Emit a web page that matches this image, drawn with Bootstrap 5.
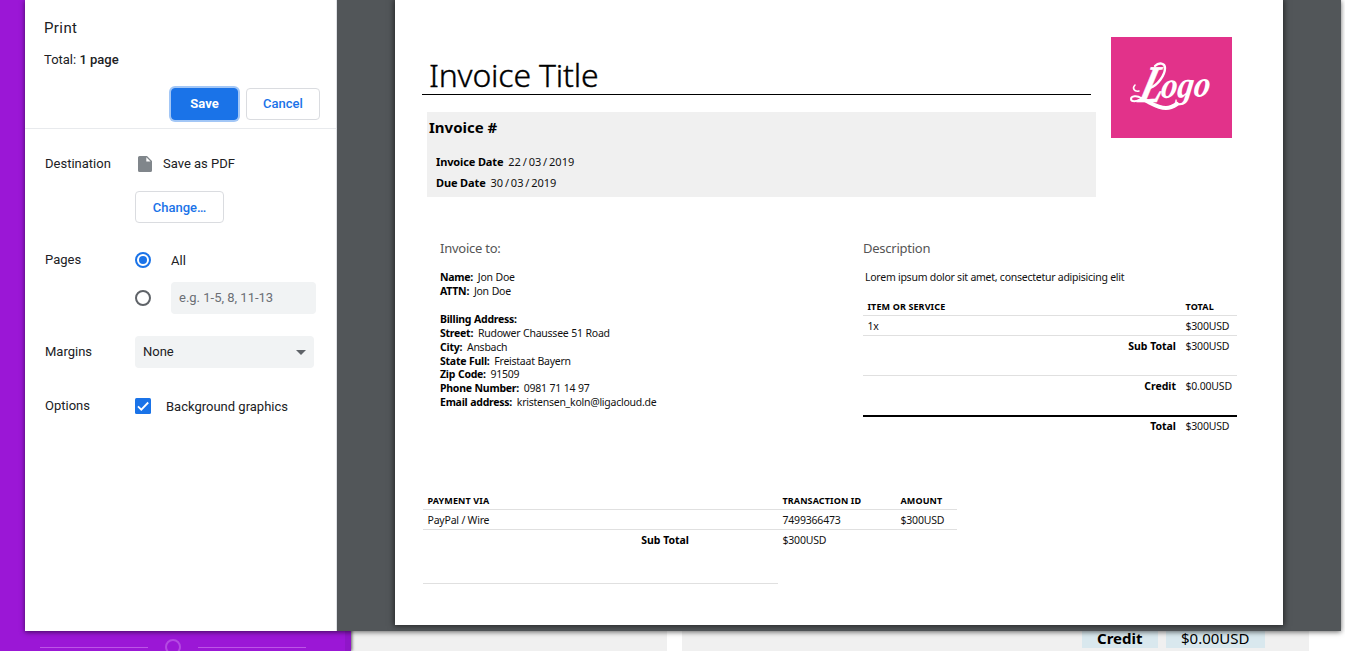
<!DOCTYPE html>
<html lang="en">
<head>
<meta charset="utf-8">
<title>Print invoice</title>
<link rel="stylesheet" href="https://cdn.jsdelivr.net/npm/bootstrap@5.3.0/dist/css/bootstrap.min.css">
<style>
  body { width: 1345px; height: 651px; font-family: Roboto, sans-serif; font-size: 13px; color: #202124; background: #fff; }
  .backdrop { height: 651px; }
  .side { width: 351px; background: #9b17d6; padding-left: 40px; border-right: 6px solid #8f16c8; box-shadow: 1px 0 3px #0009; z-index: 1; }
  .side hr { width: 108px; margin: 0; border-top: 1px solid #c565ea; opacity: .8; }
  .side .ring { width: 16px; height: 16px; border: 2px solid #b44ae2; margin: 0 17px; }
  .side-end { height: 8px; }
  .block-a { width: 316px; background: #f0f0f0; margin-right: 15px; }
  .block-b { width: 627px; background: #f0f0f0; padding: 0 44px 3px 0; gap: 8px; }
  .cellbox { height: 22px; background: #d9e8ee; color: #000; font: 15px/24px "Noto Sans", sans-serif; padding-left: 15px; }
  .dialog { left: 25px; top: 0; width: 1316px; height: 631px; box-shadow: 0 1px 5px #0009; z-index: 5; }
  .settings { width: 312px; background: #fff; border-right: 1px solid #dfe1e5; }
  .head { height: 129px; padding: 18px 16px 0 19px; border-bottom: 1px solid #e8eaed; }
  .head h1 { font-size: 15px; line-height: 20px; margin: 0 0 12px; font-weight: 400; letter-spacing: .4px; }
  .head p { line-height: 20px; margin: 0 0 18px; }
  .head p span { font-weight: 500; }
  .gbtn { height: 32px; font-size: 13px; font-weight: 500; line-height: 30px; padding: 0; border-radius: 4px; border: 1px solid #dadce0; color: #1a73e8; background: #fff; }
  .gbtn.primary { width: 67px; background: #1a73e8; color: #fff; border-color: #1a73e8; box-shadow: 0 0 0 2px #a3c7f6; font-weight: 700; }
  .gbtn.cancel { width: 74px; }
  .gbtn.change { width: 89px; margin-top: 17px; padding-top: 1px; }
  .opt { padding-left: 20px; }
  .opt > .name { width: 90px; flex: none; line-height: 20px; }
  .line20 { height: 20px; }
  .after-radio { margin-left: 20px; }
  .field { background: #f1f3f4; height: 32px; border-radius: 4px; padding: 0 8px; line-height: 32px; }
  .range { width: 145px; color: #6b6f74; }
  .choice { width: 179px; }
  .viewer { width: 1004px; background: #525659; padding: 0 58px; overflow: hidden; }
  .sheet { width: 888px; height: 625px; background: #fff; box-shadow: 0 0 6px 1px #0009; font-family: "Noto Sans", sans-serif; font-size: 11px; color: #111; }
  .sheet b { color: #000; }
  .sheet-top { padding: 37px 51px 0 27px; height: 197px; }
  .doc-title { width: 669px; height: 58px; font-size: 32px; line-height: 75px; font-weight: 300; color: #000; border-bottom: 1px solid #000; padding-left: 7px; margin: 0; white-space: nowrap; letter-spacing: -.2px; -webkit-text-stroke: .35px #000; }
  .meta { width: 669px; height: 85px; background: #f0f0f0; margin: 17px 0 0 5px; padding: 4px 0 0 2px; }
  .meta h2 { font-size: 15px; line-height: 22px; font-weight: 700; color: #000; margin: 0 0 13px; }
  .meta div { line-height: 21px; padding-left: 7px; }
  .meta b { letter-spacing: -.13px; margin-right: 2px; }
  .meta span { word-spacing: -1px; letter-spacing: 0; }
  .cols { padding: 0 46px 0 45px; height: 293px; }
  .cols h3 { font-size: 13px; line-height: 20px; font-weight: 400; color: #555; margin: 41px 0 12px; letter-spacing: -.25px; }
  .facts { line-height: 13.9px; font-size: 10.5px; letter-spacing: -.25px; padding-top: 1px; word-spacing: .3px; }
  .facts b { margin-right: 2px; }
  .lorem { line-height: 14px; padding-left: 2px; margin-bottom: 12px; font-size: 10.5px; letter-spacing: -.25px; }
  .gap-line { height: 14px; }
  .bill { width: 423px; }
  .desc { width: 374px; }
  .grid-t { border-collapse: separate; border-spacing: 0; table-layout: fixed; font-size: 10.5px; letter-spacing: -.2px; }
  .grid-t td, .grid-t th { padding: 2px 0 0 4.500px; height: 20px; line-height: 17px; vertical-align: top; border-bottom: 1px solid #e0e0e0; white-space: nowrap; }
  .grid-t th { font-size: 9px; color: #000; letter-spacing: .12px; }
  .grid-t td.text-end { padding-right: 5px; letter-spacing: 0; }
  .grid-t tr.tall td { height: 40px; }
  .grid-t tr.heavy td { border-bottom: 2px solid #000; height: 41px; }
  .grid-t td.bare, .grid-t tr.bare td { border-bottom: 0; }
  .grid-t tr.bare td { line-height: 15px; }
  .grid-t col.sum { width: 56px; }
  .pay { width: 534px; margin-left: 28px; }
  .pay tr.tall td { height: 54px; }
  .pay col.via { width: 355px; }
  .pay col.tid { width: 118px; }
  .grid-t.pay td.text-end { padding-right: 89px; }
</style>
</head>
<body class="position-relative overflow-hidden m-0">
<div class="backdrop d-flex align-items-end overflow-hidden">
  <div class="side h-100 d-flex align-items-end">
    <div class="d-flex align-items-center side-end"><hr><span class="ring rounded-circle"></span><hr></div>
  </div>
  <div class="block-a h-100"></div>
  <div class="block-b h-100 d-flex justify-content-end align-items-end">
    <div class="cellbox" style="width:76px"><b>Credit</b></div>
    <div class="cellbox" style="width:99px">$0.00USD</div>
  </div>
</div>

<div class="dialog position-absolute d-flex">
  <section class="settings">
    <div class="head">
      <h1>Print</h1>
      <p>Total: <span>1 page</span></p>
      <div class="d-flex justify-content-end gap-2">
        <button class="gbtn primary">Save</button>
        <button class="gbtn cancel">Cancel</button>
      </div>
    </div>
    <div class="opt d-flex" style="padding-top:25px">
      <div class="name">Destination</div>
      <div>
        <div class="d-flex align-items-center line20">
          <svg width="20" height="20" viewBox="0 0 20 20"><path fill="#80868b" d="M4.600 2h7.400l5 5v9.500a1.600 1.600 0 0 1-1.600 1.600H4.600A1.600 1.600 0 0 1 3 16.500V3.600A1.600 1.600 0 0 1 4.600 2z"/><path fill="#fff" d="M11.300 3.200v4.300h4.300z"/></svg>
          <span class="ms-2">Save as PDF</span>
        </div>
        <button class="gbtn change">Change…</button>
      </div>
    </div>
    <div class="opt d-flex" style="padding-top:27px">
      <div class="name">Pages</div>
      <div>
        <div class="d-flex align-items-center line20"><svg width="16" height="16"><circle cx="8" cy="8" r="7" fill="none" stroke="#1a73e8" stroke-width="2"/><circle cx="8" cy="8" r="4" fill="#1a73e8"/></svg><span class="after-radio" style="padding-top:2px">All</span></div>
        <div class="d-flex align-items-center" style="margin-top:12px"><svg width="16" height="16"><circle cx="8" cy="8" r="7" fill="none" stroke="#5f6368" stroke-width="2"/></svg><div class="field range after-radio">e.g. 1-5, 8, 11-13</div></div>
      </div>
    </div>
    <div class="opt d-flex align-items-center" style="padding-top:22px">
      <div class="name">Margins</div>
      <div class="field choice d-flex align-items-center justify-content-between"><span>None</span><svg width="10" height="5"><path fill="#5f6368" d="M0 0h10L5 5z"/></svg></div>
    </div>
    <div class="opt d-flex align-items-center" style="padding-top:27px">
      <div class="name">Options</div>
      <svg width="16" height="16"><rect width="16" height="16" rx="1.500" fill="#1a73e8"/><path d="M3 8.300l3.300 3.300L13.200 4.500" fill="none" stroke="#fff" stroke-width="1.800"/></svg>
      <span style="margin-left:15px;padding-top:2px">Background graphics</span>
    </div>
  </section>

  <section class="viewer">
    <article class="sheet">
      <div class="sheet-top d-flex justify-content-between">
        <div>
          <h1 class="doc-title">Invoice Title</h1>
          <div class="meta">
            <h2>Invoice #</h2>
            <div><b>Invoice Date</b> <span>22 / 03 / 2019</span></div>
            <div><b>Due Date</b> <span>30 / 03 / 2019</span></div>
          </div>
        </div>
        <svg width="121" height="101" viewBox="0 0 121 101">
          <rect width="121" height="101" fill="#e2328a"/>
          <text transform="translate(26 65) skewX(-16)" fill="#fff" stroke="#fff" stroke-width=".6" font-family="'Liberation Serif', serif" font-style="italic" font-weight="700" font-size="53" textLength="23" lengthAdjust="spacingAndGlyphs">L</text>
          <text transform="translate(49 61) rotate(-2) skewX(-10)" fill="#fff" font-family="'Liberation Serif', serif" font-style="italic" font-weight="700" font-size="37" textLength="49" lengthAdjust="spacingAndGlyphs">ogo</text>
          <!-- flourishes: top loop, left hook, underline -->
          <g fill="none" stroke="#fff" stroke-linecap="round">
            <path stroke-width="2.400" d="M44 29c4-4 10-3 10 2 0 7-7 17-15 20"/>
            <path stroke-width="1.600" d="M24 48c-3 3-1 7 4 6"/>
            <path stroke-width="2" d="M30 61c-4-3-10-2-10 1s6 3 10 0"/>
            <path stroke-width="4" d="M31 62c8 3 15 9 24 9 5 0 8-2 11-4"/>
          </g>
        </svg>
      </div>
      <div class="cols d-flex">
        <div class="bill">
          <h3>Invoice to:</h3>
          <div class="facts">
            <div><b>Name:</b> Jon Doe</div>
            <div><b>ATTN:</b> Jon Doe</div>
            <div class="gap-line"></div>
            <div><b>Billing Address:</b></div>
            <div><b>Street:</b> Rudower Chaussee 51 Road</div>
            <div><b>City:</b> Ansbach</div>
            <div><b>State Full:</b> Freistaat Bayern</div>
            <div><b>Zip Code:</b> 91509</div>
            <div><b>Phone Number:</b> 0981 71 14 97</div>
            <div><b>Email address:</b> kristensen_koln@ligacloud.de</div>
          </div>
        </div>
        <div class="desc">
          <h3>Description</h3>
          <div class="lorem">Lorem ipsum dolor sit amet, consectetur adipisicing elit</div>
          <table class="grid-t w-100">
            <colgroup><col><col class="sum"></colgroup>
            <tr><th>ITEM OR SERVICE</th><th>TOTAL</th></tr>
            <tr><td>1x</td><td>$300USD</td></tr>
            <tr class="tall"><td class="text-end"><b>Sub Total</b></td><td>$300USD</td></tr>
            <tr class="heavy"><td class="text-end"><b>Credit</b></td><td>$0.00USD</td></tr>
            <tr class="bare"><td class="text-end"><b>Total</b></td><td>$300USD</td></tr>
          </table>
        </div>
      </div>
      <table class="grid-t pay">
        <colgroup><col class="via"><col class="tid"><col></colgroup>
        <tr><th>PAYMENT VIA</th><th>TRANSACTION ID</th><th>AMOUNT</th></tr>
        <tr><td>PayPal / Wire</td><td>7499366473</td><td>$300USD</td></tr>
        <tr class="tall"><td class="text-end"><b>Sub Total</b></td><td class="bare">$300USD</td><td class="bare"></td></tr>
      </table>
    </article>
  </section>
</div>
<script src="https://cdn.jsdelivr.net/npm/bootstrap@5.3.0/dist/js/bootstrap.bundle.min.js"></script>
</body>
</html>
